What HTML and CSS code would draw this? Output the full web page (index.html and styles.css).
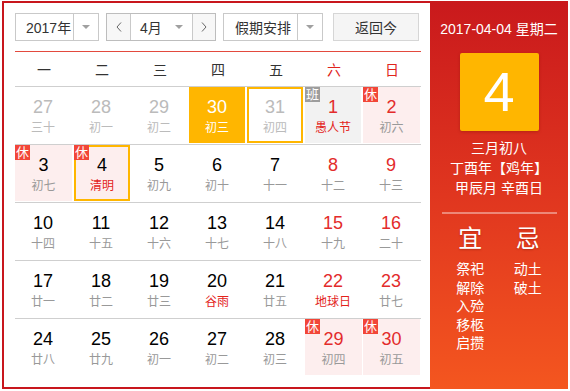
FILE: index.html
```html
<!DOCTYPE html>
<html lang="zh-CN">
<head>
<meta charset="utf-8">
<title>万年历</title>
<link rel="stylesheet" href="styles.css">
</head>
<body>
<div class="frame">
  <div class="main">
    <div class="controls">
      <div class="select sel-year">
        <span class="sel-text">2017年</span>
        <span class="sel-arrow"><i class="tri"></i></span>
      </div>
      <div class="select sel-month">
        <span class="nav"><svg width="6" height="10" viewBox="0 0 6 10"><polyline points="5,0.5 1,5 5,9.5" fill="none" stroke="#666" stroke-width="1"/></svg></span>
        <span class="month-text"><span>4月</span><i class="tri"></i></span>
        <span class="nav"><svg width="6" height="10" viewBox="0 0 6 10"><polyline points="1,0.5 5,5 1,9.5" fill="none" stroke="#666" stroke-width="1"/></svg></span>
      </div>
      <div class="select sel-holiday">
        <span class="sel-text">假期安排</span>
        <span class="sel-arrow"><i class="tri"></i></span>
      </div>
      <div class="btn-today">返回今</div>
    </div>
    <div class="cal">
      <div class="week-head">
        <span>一</span><span>二</span><span>三</span><span>四</span><span>五</span><span class="we">六</span><span class="we">日</span>
      </div>
      <div class="week">
        <div class="day other"><b>27</b><em>三十</em></div>
        <div class="day other"><b>28</b><em>初一</em></div>
        <div class="day other"><b>29</b><em>初二</em></div>
        <div class="day today"><b>30</b><em>初三</em></div>
        <div class="day other marked"><b>31</b><em>初四</em></div>
        <div class="day work red"><i class="badge badge-work">班</i><b>1</b><em class="fest">愚人节</em></div>
        <div class="day rest red"><i class="badge">休</i><b>2</b><em>初六</em></div>
      </div>
      <div class="week">
        <div class="day rest"><i class="badge">休</i><b>3</b><em>初七</em></div>
        <div class="day rest selected"><i class="badge">休</i><b>4</b><em class="fest">清明</em></div>
        <div class="day"><b>5</b><em>初九</em></div>
        <div class="day"><b>6</b><em>初十</em></div>
        <div class="day"><b>7</b><em>十一</em></div>
        <div class="day red"><b>8</b><em>十二</em></div>
        <div class="day red"><b>9</b><em>十三</em></div>
      </div>
      <div class="week">
        <div class="day"><b>10</b><em>十四</em></div>
        <div class="day"><b>11</b><em>十五</em></div>
        <div class="day"><b>12</b><em>十六</em></div>
        <div class="day"><b>13</b><em>十七</em></div>
        <div class="day"><b>14</b><em>十八</em></div>
        <div class="day red"><b>15</b><em>十九</em></div>
        <div class="day red"><b>16</b><em>二十</em></div>
      </div>
      <div class="week">
        <div class="day"><b>17</b><em>廿一</em></div>
        <div class="day"><b>18</b><em>廿二</em></div>
        <div class="day"><b>19</b><em>廿三</em></div>
        <div class="day"><b>20</b><em class="fest">谷雨</em></div>
        <div class="day"><b>21</b><em>廿五</em></div>
        <div class="day red"><b>22</b><em class="fest">地球日</em></div>
        <div class="day red"><b>23</b><em>廿七</em></div>
      </div>
      <div class="week last">
        <div class="day"><b>24</b><em>廿八</em></div>
        <div class="day"><b>25</b><em>廿九</em></div>
        <div class="day"><b>26</b><em>初一</em></div>
        <div class="day"><b>27</b><em>初二</em></div>
        <div class="day"><b>28</b><em>初三</em></div>
        <div class="day rest red"><i class="badge">休</i><b>29</b><em>初四</em></div>
        <div class="day rest red"><i class="badge">休</i><b>30</b><em>初五</em></div>
      </div>
    </div>
  </div>
  <div class="panel">
    <div class="p-date">2017-04-04 星期二</div>
    <div class="p-box">4</div>
    <div class="p-lunar">
      <div>三月初八</div>
      <div>丁酉年【鸡年】</div>
      <div>甲辰月 辛酉日</div>
    </div>
    <div class="p-line"></div>
    <div class="p-yiji">
      <div class="p-col">
        <div class="p-h">宜</div>
        <div class="p-list"><div>祭祀</div><div>解除</div><div>入殓</div><div>移柩</div><div>启攒</div></div>
      </div>
      <div class="p-col">
        <div class="p-h">忌</div>
        <div class="p-list"><div>动土</div><div>破土</div></div>
      </div>
    </div>
  </div>
</div>
</body>
</html>
```
FILE: styles.css
```css
* { box-sizing: border-box; }
body {
  margin: 0;
  background: #fff;
  font-family: "Liberation Sans", Arial, "Noto Sans CJK SC", sans-serif;
  color: #333;
}
.frame {
  margin: 1px 0 0 2px;
  width: 566px;
  height: 388px;
  border: 2px solid #c8161d;
  border-right: 0;
  display: flex;
}
.main {
  width: 426px;
  padding: 10px 9px 0 11px;
}
.controls {
  display: flex;
  height: 28px;
  font-size: 14px;
}
.select {
  display: flex;
  border: 1px solid #c9c9c9;
  background: #fff;
  align-items: stretch;
}
.sel-year { width: 84px; margin-right: 7px; }
.sel-month { width: 110px; margin-right: 7px; border-color: #bdbdbd; }
.sel-holiday { width: 100px; margin-right: 10px; }
.sel-text {
  flex: 1;
  display: flex;
  align-items: center;
  padding-left: 10px;
  color: #333;
}
.sel-holiday .sel-text { padding-left: 11px; }
.sel-arrow {
  width: 25px;
  border-left: 1px solid #c9c9c9;
  display: flex;
  align-items: center;
  justify-content: center;
}
.tri {
  display: block;
  width: 0;
  height: 0;
  border-left: 4px solid transparent;
  border-right: 4px solid transparent;
  border-top: 4px solid #a0a0a0;
}
.nav {
  width: 23px;
  background: #f7f7f7;
  display: flex;
  align-items: center;
  justify-content: center;
}
.nav:last-child { width: 22px; }
.month-text {
  flex: 1;
  display: flex;
  align-items: center;
  justify-content: space-between;
  padding: 0 9px 0 9px;
  border-left: 1px solid #c9c9c9;
  border-right: 1px solid #c9c9c9;
}
.btn-today {
  width: 86px;
  border: 1px solid #d6d6d6;
  background: #f5f5f5;
  display: flex;
  align-items: center;
  justify-content: center;
  color: #333;
}
.cal {
  margin-top: 10px;
  border-top: 1px solid #e34a3e;
  width: 406px;
}
.week-head {
  display: grid;
  grid-template-columns: repeat(7, 58px);
  height: 35px;
  border-bottom: 1px solid #cfcfcf;
  font-size: 14px;
  color: #333;
}
.week-head span {
  display: flex;
  align-items: center;
  justify-content: center;
}
.week-head .we { color: #e0241c; }
.week {
  display: grid;
  grid-template-columns: repeat(7, 58px);
  height: 58px;
  border-bottom: 1px solid #cfcfcf;
}
.week.last { border-bottom: 0; height: 57px; }
.day {
  position: relative;
  width: 56px;
  height: 56px;
  text-align: center;
  padding-top: 10px;
}
.day b {
  display: block;
  font-weight: normal;
  font-size: 18px;
  line-height: 20px;
  color: #000;
}
.day em {
  display: block;
  font-style: normal;
  font-size: 12px;
  line-height: 16px;
  margin-top: 3px;
  color: #999;
}
.day.red b { color: #e32b2b; }
.day em.fest { color: #e3231b; }
.day.other b, .day.other em { color: #bbb; }
.day.rest { background: #fdeeee; width: 57px; }
.day.work { background: #f2f2f2; }
.day.today { background: #ffb600; }
.day.today b, .day.today em { color: #fff; }
.day.marked, .day.selected {
  border: 2px solid #ffb600;
  padding-top: 8px;
}
.day.selected { width: 56px; margin-left: 1px; }
.badge {
  position: absolute;
  left: 0;
  top: 0;
  width: 15px;
  height: 15px;
  background: #f24638;
  color: #fff;
  font-style: normal;
  font-size: 13px;
  line-height: 15px;
  text-align: center;
}
.day.selected .badge { left: -2px; top: -2px; }
.badge-work { background: #9d9d9d; }
.panel {
  width: 138px;
  height: 388px;
  margin-top: -2px;
  background: linear-gradient(180deg, #c9191c 0%, #e0361f 50%, #f4561f 100%);
  color: #fff;
  display: flex;
  flex-direction: column;
  align-items: center;
  padding-top: 18px;
}
.p-date {
  font-size: 14px;
  line-height: 20px;
  white-space: nowrap;
}
.p-box {
  margin-top: 14px;
  width: 79px;
  height: 78px;
  background: #ffb600;
  border-radius: 2px;
  box-shadow: 0 1px 3px rgba(120, 20, 0, 0.35);
  font-size: 56px;
  line-height: 78px;
  text-align: center;
  color: #fff;
}
.p-lunar {
  margin-top: 7px;
  font-size: 14px;
  line-height: 20px;
  text-align: center;
}
.p-line {
  margin-top: 14px;
  width: 115px;
  height: 2px;
  background: rgba(255, 255, 255, 0.4);
}
.p-yiji {
  display: flex;
  width: 115px;
}
.p-col {
  flex: 1;
  display: flex;
  flex-direction: column;
  align-items: center;
}
.p-h {
  margin-top: 12px;
  font-size: 24px;
  line-height: 26px;
  font-weight: normal;
  text-shadow: 0 1px 2px rgba(120, 20, 0, 0.4);
}
.p-list {
  margin-top: 8px;
  font-size: 14px;
  line-height: 18.5px;
}
```
